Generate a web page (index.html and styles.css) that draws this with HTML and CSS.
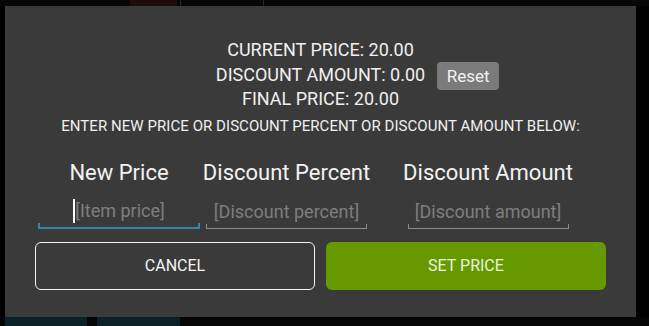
FILE: index.html
```html
<!DOCTYPE html>
<html>
<head>
<meta charset="utf-8">
<link rel="stylesheet" href="styles.css">
</head>
<body>
<div class="screen">
  <div class="backdrop-top">
    <span class="bg-price"></span>
    <span class="bg-line"></span>
    <span class="bg-line bg-line2"></span>
  </div>
  <div class="dialog">
    <div class="info">
      <div class="info-line">CURRENT PRICE: 20.00</div>
      <div class="info-row">
        <span class="info-text">DISCOUNT AMOUNT: 0.00</span>
        <button class="reset">Reset</button>
      </div>
      <div class="info-line">FINAL PRICE: 20.00</div>
      <div class="hint">ENTER NEW PRICE OR DISCOUNT PERCENT OR DISCOUNT AMOUNT BELOW:</div>
    </div>
    <div class="fields">
      <div class="col col1">
        <div class="label">New Price</div>
        <div class="field focused"><span class="caret"></span><span class="ph">[Item price]</span></div>
      </div>
      <div class="col col2">
        <div class="label">Discount Percent</div>
        <div class="field"><span class="ph">[Discount percent]</span></div>
      </div>
      <div class="col col3">
        <div class="label">Discount Amount</div>
        <div class="field"><span class="ph">[Discount amount]</span></div>
      </div>
    </div>
    <div class="actions">
      <button class="btn cancel">CANCEL</button>
      <button class="btn primary">SET PRICE</button>
    </div>
  </div>
  <div class="backdrop-bottom">
    <span class="bg-tab"></span>
    <span class="bg-tab bg-tab2"></span>
  </div>
</div>
</body>
</html>
```
FILE: styles.css
```css
html, body {
  margin: 0;
  padding: 0;
  background: #000;
}
body {
  font-family: Roboto, "Noto Sans", sans-serif;
  color: #f0f0f0;
  width: 649px;
  height: 326px;
  overflow: hidden;
}
.screen {
  display: flex;
  flex-direction: column;
}
.backdrop-top {
  height: 6px;
  display: flex;
  background: #070707;
}
.bg-price {
  margin-left: 130px;
  width: 47px;
  height: 6px;
  background: #1e0b0b;
}
.bg-line {
  margin-left: 3px;
  width: 1px;
  background: #262626;
}
.bg-line2 {
  margin-left: 82px;
}
.dialog {
  margin-left: 5px;
  width: 631px;
  height: 311px;
  background: #3a3a3a;
  box-sizing: border-box;
  padding-top: 32px;
  display: flex;
  flex-direction: column;
}
.info {
  text-align: center;
  font-size: 18px;
  line-height: 24.5px;
}
.info-row {
  display: grid;
  grid-template-columns: 1fr auto 1fr;
  grid-template-rows: 24.5px;
  align-items: center;
}
.info-text {
  grid-column: 2;
}
.reset {
  grid-column: 3;
  justify-self: start;
  margin-left: 12px;
  width: 62px;
  height: 28px;
  border: none;
  border-radius: 4px;
  background: #7b7b7b;
  color: #f2f2f2;
  font-family: Roboto, "Noto Sans", sans-serif;
  font-size: 17px;
  padding: 0;
  transform: translateY(1px);
}
.hint {
  margin-top: 4px;
  font-size: 15px;
  letter-spacing: 0.06px;
  line-height: 20px;
}
.fields {
  display: flex;
  margin-top: 24px;
}
.col {
  display: flex;
  flex-direction: column;
  align-items: center;
}
.col1 {
  margin-left: 33px;
  width: 162px;
}
.col2 {
  margin-left: 3px;
  width: 167px;
}
.col3 {
  margin-left: 34px;
  width: 168px;
}
.label {
  font-size: 22px;
  line-height: 26px;
  color: #f2f2f2;
  white-space: nowrap;
}
.field {
  margin-top: 9px;
  width: 161px;
  height: 34px;
  box-sizing: border-box;
  border-bottom: 1px solid #8c8c8c;
  display: flex;
  justify-content: center;
  align-items: center;
  position: relative;
}
.col1 .field {
  width: 162px;
}
.field::before,
.field::after {
  content: "";
  position: absolute;
  bottom: 0;
  width: 1px;
  height: 4px;
  background: #8c8c8c;
}
.field::before { left: 0; }
.field::after { right: 0; }
.field.focused {
  border-bottom: 2px solid #2d8aa8;
}
.field.focused::before,
.field.focused::after {
  width: 2px;
  background: #2d8aa8;
}
.ph {
  font-size: 18px;
  color: #7e7e7e;
  white-space: nowrap;
}
.caret {
  width: 2px;
  height: 24px;
  background: #ffffff;
}
.actions {
  display: flex;
  gap: 11px;
  margin-top: 13px;
  padding: 0 30px;
}
.btn {
  width: 280px;
  height: 48px;
  border-radius: 6px;
  font-family: Roboto, "Noto Sans", sans-serif;
  font-size: 16px;
  color: #f4f4f4;
  padding: 0;
  box-sizing: border-box;
}
.cancel {
  background: transparent;
  border: 1.5px solid #f4f4f4;
}
.primary {
  background: #669900;
  border: none;
  color: #eaf2dc;
}
.backdrop-bottom {
  height: 9px;
  display: flex;
  background: #050505;
}
.bg-tab {
  margin-left: 5px;
  width: 82px;
  background: #0b2128;
}
.bg-tab2 {
  margin-left: 10px;
  width: 83px;
}
```
